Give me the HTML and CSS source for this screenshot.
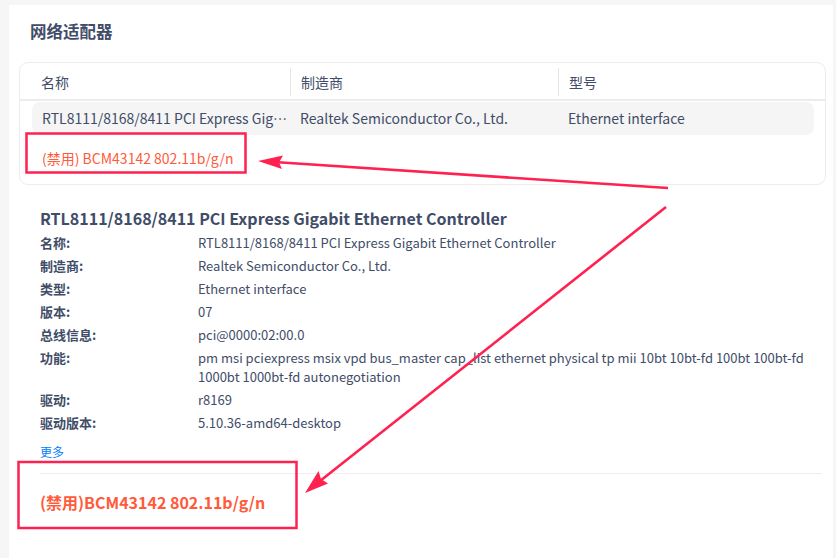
FILE: index.html
```html
<!DOCTYPE html>
<html lang="zh-CN">
<head>
<meta charset="utf-8">
<title>网络适配器</title>
<link rel="stylesheet" href="styles.css">
</head>
<body>
<div class="panel">
  <h2 class="page-title">网络适配器</h2>
  <div class="table">
    <div class="thead">
      <div class="th">名称</div>
      <div class="th sep">制造商</div>
      <div class="th sep">型号</div>
    </div>
    <div class="tr selected">
      <div class="td ellipsis">RTL8111/8168/8411 PCI Express Gigabit Ethernet Controller</div>
      <div class="td">Realtek Semiconductor Co., Ltd.</div>
      <div class="td">Ethernet interface</div>
    </div>
    <div class="tr disabled">
      <div class="td wide">(禁用) BCM43142 802.11b/g/n</div>
    </div>
  </div>

  <div class="detail">
    <h3 class="detail-title">RTL8111/8168/8411 PCI Express Gigabit Ethernet Controller</h3>
    <dl class="props">
      <dt>名称:</dt><dd>RTL8111/8168/8411 PCI Express Gigabit Ethernet Controller</dd>
      <dt>制造商:</dt><dd>Realtek Semiconductor Co., Ltd.</dd>
      <dt>类型:</dt><dd>Ethernet interface</dd>
      <dt>版本:</dt><dd>07</dd>
      <dt>总线信息:</dt><dd>pci@0000:02:00.0</dd>
      <dt>功能:</dt><dd>pm msi pciexpress msix vpd bus_master cap_list ethernet physical tp mii 10bt 10bt-fd 100bt 100bt-fd 1000bt 1000bt-fd autonegotiation</dd>
      <dt>驱动:</dt><dd>r8169</dd>
      <dt>驱动版本:</dt><dd>5.10.36-amd64-desktop</dd>
    </dl>
    <a class="more" href="#">更多</a>
    <div class="divider"></div>
    <div class="detail-title disabled-title">(禁用)BCM43142 802.11b/g/n</div>
  </div>
</div>

<svg class="annotations" width="836" height="558" viewBox="0 0 836 558" aria-hidden="true">
  <rect x="26.5" y="133.5" width="219" height="39" fill="none" stroke="#ff2150" stroke-width="2.5"/>
  <rect x="18.5" y="462" width="278" height="66" fill="none" stroke="#ff2150" stroke-width="2.5"/>
  <line x1="668" y1="188" x2="278" y2="162.3" stroke="#ff2150" stroke-width="2.6"/>
  <polygon points="258,161 283,155.5 279,162.4 282,169" fill="#ff2150"/>
  <line x1="666" y1="207" x2="320" y2="481" stroke="#ff2150" stroke-width="2.6"/>
  <polygon points="305,493 318.5,471 321,479 328,483.5" fill="#ff2150"/>
</svg>
</body>
</html>
```
FILE: styles.css
```css
html, body {
  margin: 0;
  padding: 0;
}
body {
  width: 836px;
  height: 558px;
  overflow: hidden;
  background: #f6f6f6;
  font-family: "Noto Sans CJK SC", "Noto Sans", sans-serif;
  color: #414d68;
  position: relative;
}
.panel {
  margin: 5px 3px 0 9px;
  height: 553px;
  background: #ffffff;
  padding: 14px 7px 0 10px;
  box-sizing: border-box;
}
.page-title {
  margin: 0 0 19px 11px;
  font-size: 16.5px;
  line-height: 24px;
  font-weight: 700;
  color: #414d68;
}
.table {
  border: 1px solid #ececec;
  border-radius: 9px;
  padding-bottom: 10px;
}
.thead {
  display: grid;
  grid-template-columns: 258px 268px 1fr;
  padding: 5px 12px 3px 12px;
  border-bottom: 2px solid #ececec;
}
.th {
  font-size: 14px;
  line-height: 28px;
  padding-left: 9px;
  color: #414d68;
}
.th.sep {
  border-left: 1px solid #e6e6e6;
  padding-left: 10px;
}
.tr {
  display: grid;
  grid-template-columns: 258px 268px 1fr;
  margin: 0 11px 0 12px;
  height: 33px;
  align-items: center;
  border-radius: 8px;
}
.tr.selected {
  margin-top: 1px;
  background: #f5f5f5;
  padding-bottom: 2px;
  height: 33px;
  box-sizing: border-box;
}
.tr.disabled {
  margin-top: 6px;
  color: #ff5a3a;
}
.td {
  font-size: 14px;
  padding-left: 10px;
  white-space: nowrap;
  overflow: hidden;
}
.td.ellipsis {
  text-overflow: ellipsis;
  padding-right: 2px;
}
.td.wide {
  grid-column: 1 / 4;
}
.detail {
  padding: 21px 4px 0 21px;
}
.detail-title {
  margin: 0;
  font-size: 16px;
  line-height: 24px;
  font-weight: 700;
  color: #414d68;
}
.props {
  margin: 3px 0 0 0;
  display: grid;
  grid-template-columns: 158px 1fr;
  row-gap: 4px;
  font-size: 13px;
  line-height: 19px;
}
.props dt {
  font-weight: 700;
  color: #414d68;
}
.props dd {
  margin: 0;
  color: #414d68;
}
.more {
  display: block;
  margin-top: 11px;
  font-size: 12px;
  line-height: 18px;
  color: #0081ff;
  text-decoration: none;
  width: max-content;
}
.divider {
  margin-top: 12px;
  height: 1px;
  background: #eeeeee;
}
.disabled-title {
  margin-top: 16px;
  color: #ff5a3a;
}
.annotations {
  position: absolute;
  left: 0;
  top: 0;
  pointer-events: none;
}
```
